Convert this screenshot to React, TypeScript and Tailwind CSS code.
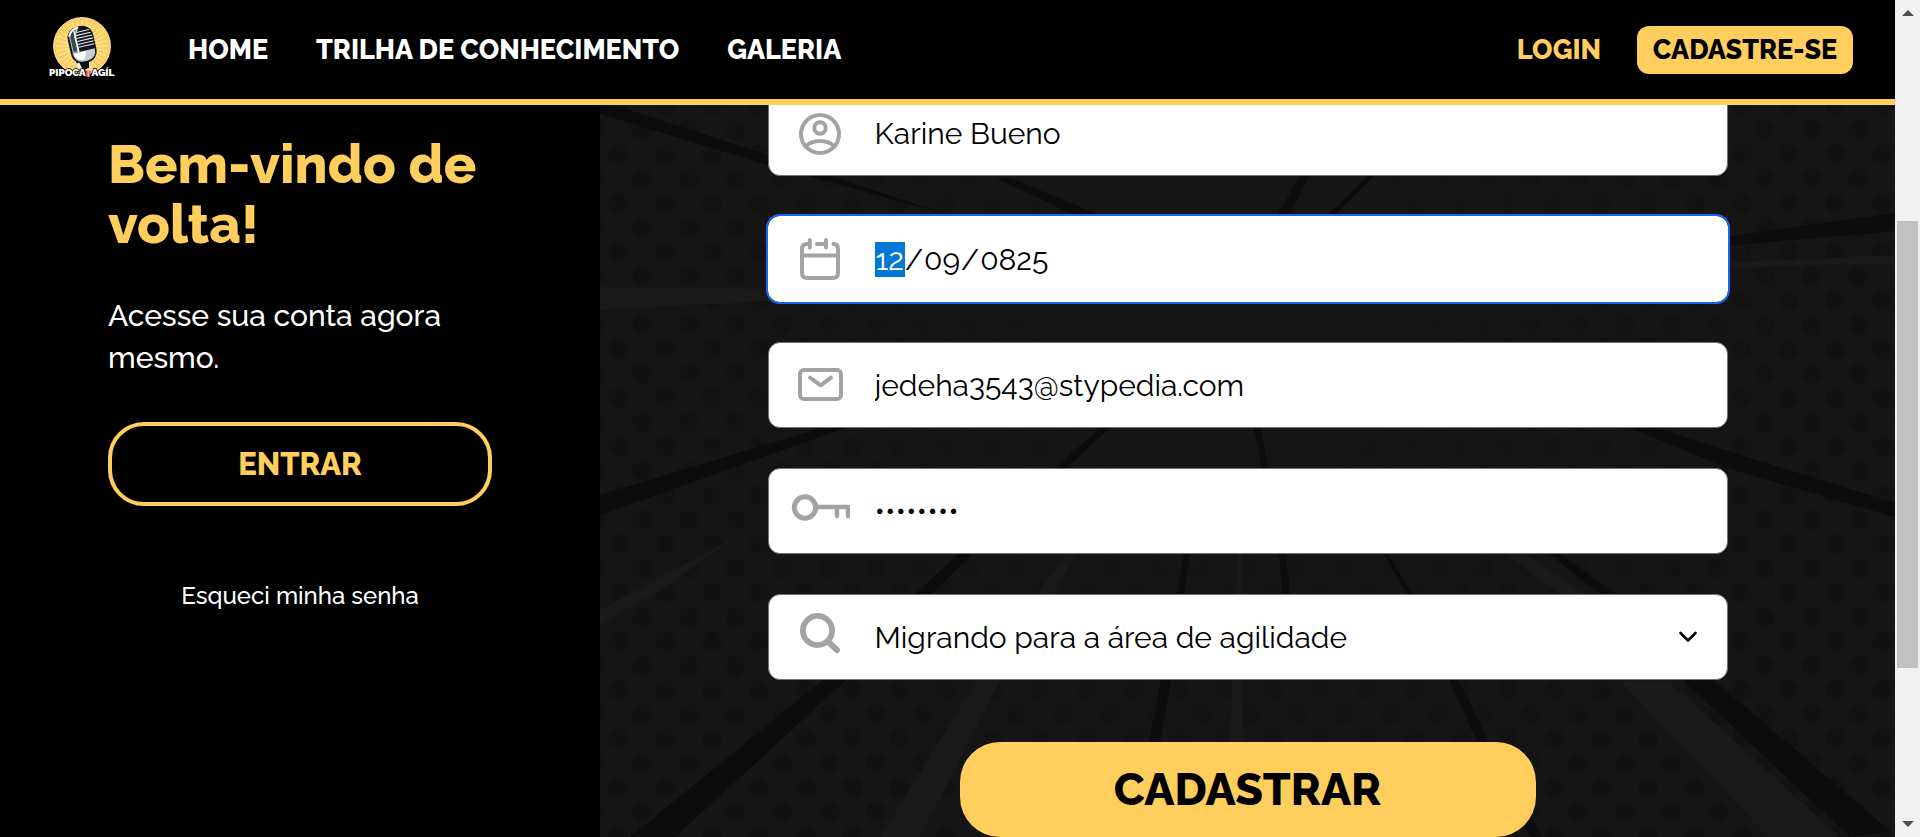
import type { ReactNode } from 'react';

const RAYS = Array.from({ length: 32 }, (_, i) => (i * Math.PI) / 16);

function Logo() {
  return (
    <svg viewBox="0 0 68 64" className="h-16 w-[68px]" role="img" aria-label="Pipoca Ágil">
      <circle cx="34" cy="30" r="28.5" fill="#ffce5c" stroke="#fff3cf" strokeWidth="0.8" />
      <g stroke="#fff0c4" strokeWidth="1">
        {RAYS.map((a) => (
          <line key={a} x1={34 + 13 * Math.cos(a)} y1={30 + 13 * Math.sin(a)} x2={34 + 26 * Math.cos(a)} y2={30 + 26 * Math.sin(a)} />
        ))}
      </g>
      <path d="M28 46 L33 52 L33 60 H41 L41 45 Z" fill="#0b0f12" />
      <path d="M31 46 l4 8 -3 2 -3 -8z" fill="#eef3f5" />
      <g transform="rotate(-13 34 28)">
        <rect x="21" y="10" width="26" height="37" rx="11" fill="#10171c" />
        <path d="M23 20 q1-8 9-9 l2 0 -4 7 v17 l-7 0z" fill="#b9c6cc" />
        <path d="M24 20 q1-6 7-8 l-3 8 v14 h-4z" fill="#3a4850" />
        <g stroke="#dfe7ea" strokeWidth="1.1">
          <path d="M31 15.500h13M30 18.500h15M30 21.500h16M30 24.500h16M30 27.500h16M30 30.500h16" />
        </g>
        <path d="M23 18 q3-7 11-7" stroke="#ffffff" strokeWidth="1.8" fill="none" />
        <path d="M29 13v22" stroke="#ffffff" strokeWidth="1.3" />
        <path d="M22.500 35 h23 q0 10 -10 10.500 h-4 q-8-1-9-10.500z" fill="#c3d0d6" />
        <path d="M24 36 h12 q-1 7 -5 8 q-6-1-7-8z" fill="#ffffff" />
      </g>
      <g fontFamily="Raleway, Lato, sans-serif" fontWeight="900" fontSize="10" stroke="#000000" strokeWidth="1.6" paintOrder="stroke">
        <text x="1" y="60" fill="#ffffff">PIPOCA</text>
        <text x="43.500" y="60" fill="#ffffff">AGÍL</text>
      </g>
      <path d="M37.500 54 h5.500 l-1 7 h-3.500z" fill="#e05252" />
      <path d="M37.500 54 q2.700-3 5.500 0z M40.200 54.500v6" fill="#fff3cf" stroke="#ffe9e9" strokeWidth="0.9" />
    </svg>
  );
}

function Icon({ children }: { children: ReactNode }) {
  return (
    <svg viewBox="0 0 60 60" className="size-[60px] shrink-0" fill="none" stroke="#a3a3a3" strokeWidth="4" strokeLinecap="round" strokeLinejoin="round" aria-hidden="true">
      {children}
    </svg>
  );
}

function Field({ id, label, icon, focused, children }: { id: string; label: string; icon: ReactNode; focused?: boolean; children: ReactNode }) {
  return (
    <div
      className={
        focused
          ? 'relative flex h-[86px] items-center gap-[25px] overflow-hidden rounded-xl bg-white pl-[22px] outline-2 outline-[#1b63f0]'
          : 'relative flex h-[86px] items-center gap-[25px] overflow-hidden rounded-xl border border-gray-500 bg-white pl-[21px]'
      }
    >
      <label htmlFor={id} aria-label={label}>
        <Icon>{icon}</Icon>
      </label>
      {children}
    </div>
  );
}

const INPUT = 'h-full min-w-0 flex-1 appearance-none bg-transparent text-[30px] font-normal text-black outline-none';

const DARK_STREAKS = [
  '0,0 0,9 168,60 349,110 230,71 168,50 20,2',
  '396,73 410,73 500,110 474,110',
  '0,390 231,320 380,275 231,328 0,410',
  '30,732 75,732 245,576 372,449 510,323 500,323 358,449 222,576',
  '549,637 560,637 571,576 590,449 584,449 561,576',
  '654,324 661,324 686,449 690,489 682,489 679,449',
  '784,449 788,449 812,489 860,578 889,637 942,732 930,732 877,637 851,578 807,489',
  '949,449 960,449 1016,489 1108,570 1290,726 1250,732 1084,576 1000,489',
  '1025,321 1060,324 1140,350 1295,398 1295,412 1130,364',
  '1125,132 1295,108 1295,126 1125,141',
  '703,65 712,65 690,109 678,109',
  '774,65 780,65 736,109 728,109',
];

const LIGHT_STREAKS = [
  '0,505 139,430 60,485 0,520',
  '280,732 320,732 400,576 478,449 466,449 376,576',
  '632,576 638,449 642,449 641,576 644,637 630,637',
  '1020,576 1068,576 1240,732 1168,732',
  '905,449 925,449 985,489 960,489',
  '1080,160 1295,150 1295,158 1080,164',
  '0,182 168,184 168,196 0,205',
];

function BurstBackground() {
  return (
    <svg viewBox="0 0 1295 732" preserveAspectRatio="xMidYMin slice" className="absolute inset-0 size-full" aria-hidden="true">
      <defs>
        <pattern id="dots" x="1141.600" y="0.700" width="46.800" height="48.700" patternUnits="userSpaceOnUse">
          <g fill="#121212">
            <circle cx="23.400" cy="24.350" r="10" />
            <circle cx="0" cy="0" r="10" />
            <circle cx="46.800" cy="0" r="10" />
            <circle cx="0" cy="48.700" r="10" />
            <circle cx="46.800" cy="48.700" r="10" />
          </g>
        </pattern>
        <radialGradient id="fade" gradientUnits="userSpaceOnUse" cx="636" cy="195" r="640">
          <stop offset="0.300" stopColor="#000000" />
          <stop offset="1" stopColor="#ffffff" />
        </radialGradient>
        <mask id="edges">
          <rect width="1295" height="732" fill="url(#fade)" />
        </mask>
      </defs>
      <rect width="1295" height="732" fill="#151515" />
      <rect width="1295" height="732" fill="url(#dots)" mask="url(#edges)" />
      {LIGHT_STREAKS.map((points) => (
        <polygon key={points} points={points} fill="#191919" />
      ))}
      {DARK_STREAKS.map((points) => (
        <polygon key={points} points={points} fill="#0c0c0c" />
      ))}
    </svg>
  );
}

function PageScrollbar() {
  return (
    <div className="flex w-[25px] shrink-0 flex-col items-center justify-between bg-[#f1f1f1] py-2.5" aria-hidden="true">
      <svg viewBox="0 0 12 6" className="h-1.5 w-3" fill="#505050"><path d="M0 6 6 0l6 6z" /></svg>
      <div className="flex w-full flex-1 flex-col px-0.5">
        <div className="grow-[205]" />
        <div className="grow-[447] bg-[#c1c1c1]" />
        <div className="grow-[153]" />
      </div>
      <svg viewBox="0 0 12 6" className="h-1.5 w-3" fill="#505050"><path d="M0 0h12L6 6z" /></svg>
    </div>
  );
}

export default function App() {
  return (
    <div className="flex h-screen overflow-hidden bg-black font-[Raleway,'Open_Sans',sans-serif]">
      <div className="flex min-w-0 flex-1 flex-col">
        <header className="z-10 flex h-[105px] shrink-0 items-center border-b-6 border-[#ffce5c] bg-black pr-[42px] pl-12 text-[27px] font-extrabold text-white">
          <a href="#inicio" className="-mt-1"><Logo /></a>
          <nav className="ml-[72px] flex gap-12 pt-0.5">
            <a href="#home">HOME</a>
            <a href="#trilha">TRILHA DE CONHECIMENTO</a>
            <a href="#galeria">GALERIA</a>
          </nav>
          <div className="ml-auto flex items-center gap-9">
            <a href="#login" className="pt-0.5 text-[#ffce5c]">LOGIN</a>
            <a href="#cadastro" className="flex h-12 w-[216px] items-center justify-center rounded-xl bg-[#ffce5c] pt-0.5 text-black">CADASTRE-SE</a>
          </div>
        </header>

        <div className="flex min-h-0 flex-1">
          <aside className="flex w-[600px] shrink-0 flex-col px-[108px] pt-[29px]">
            <h1 className="text-[54px] leading-[60px] font-extrabold text-[#ffce5c]">Bem-vindo de volta!</h1>
            <p className="mt-[41px] text-[30px] leading-[42px] font-medium text-white">Acesse sua conta agora mesmo.</p>
            <button type="button" className="mt-[43px] h-[84px] rounded-[36px] border-4 border-[#ffce5c] text-[31px] font-extrabold text-[#ffce5c]">ENTRAR</button>
            <a href="#recuperar" className="mt-[72px] text-center text-[24px] leading-9 font-medium text-white">Esqueci minha senha</a>
          </aside>

          <main className="relative min-w-0 flex-1 overflow-hidden">
            <BurstBackground />
            <form className="relative mx-auto -mt-[15px] flex w-[960px] max-w-full flex-col gap-10" onSubmit={(e) => e.preventDefault()}>
              <Field
                id="nome"
                label="Nome"
                icon={<><circle cx="30" cy="31" r="19" /><circle cx="30" cy="25" r="5.700" /><path d="M15.500 43.500Q21 38 30 38t14.500 5.500" /></>}
              >
                <input id="nome" type="text" defaultValue="Karine Bueno" className={INPUT} />
              </Field>
              <Field
                id="nascimento"
                label="Data de nascimento"
                focused
                icon={<><path d="M17 15q-5 0-5 5v24q0 5 5 5h26q5 0 5-5V20q0-5-4.500-5M27 15h9M12 26.500h36M19.800 11v7.500M36 11v7.500" /></>}
              >
                <input
                  id="nascimento"
                  type="date"
                  autoFocus
                  defaultValue="0825-12-09"
                  className={`${INPUT} [&::-webkit-calendar-picker-indicator]:hidden [&::-webkit-datetime-edit-month-field]:bg-[#0078d7]! [&::-webkit-datetime-edit-month-field]:text-white!`}
                />
              </Field>
              <Field
                id="email"
                label="E-mail"
                icon={<><rect x="10" y="15" width="41" height="29" rx="4" /><path d="m20 22.700 10.600 7.600L41 22.700" /></>}
              >
                <input id="email" type="email" defaultValue="jedeha3543@stypedia.com" className={INPUT} />
              </Field>
              <Field
                id="senha"
                label="Senha"
                icon={<><circle cx="15" cy="26.500" r="10.700" strokeWidth="5" /><path d="M27 26h31v9M47 26v9" strokeWidth="4.500" /></>}
              >
                <input id="senha" type="password" defaultValue="pipoca12" className={INPUT} />
              </Field>
              <Field
                id="area"
                label="Momento profissional"
                icon={<><circle cx="27.500" cy="23.500" r="14.600" strokeWidth="5.800" /><path d="m38.500 35 8.500 8" strokeWidth="6" /></>}
              >
                <select id="area" className={INPUT}>
                  <option>Migrando para a área de agilidade</option>
                </select>
                <svg viewBox="0 0 20 12" className="pointer-events-none absolute right-[29px] h-3 w-5" fill="none" stroke="#000000" strokeWidth="2.600" strokeLinecap="round" strokeLinejoin="round" aria-hidden="true">
                  <path d="m2.500 2 7.500 7.500L17.500 2" />
                </svg>
              </Field>
              <button type="submit" className="mx-auto mt-[22px] h-[95px] w-[576px] max-w-full rounded-[40px] bg-[#ffce5c] text-[45px] font-extrabold text-black">CADASTRAR</button>
            </form>
          </main>
        </div>
      </div>
      <PageScrollbar />
    </div>
  );
}
